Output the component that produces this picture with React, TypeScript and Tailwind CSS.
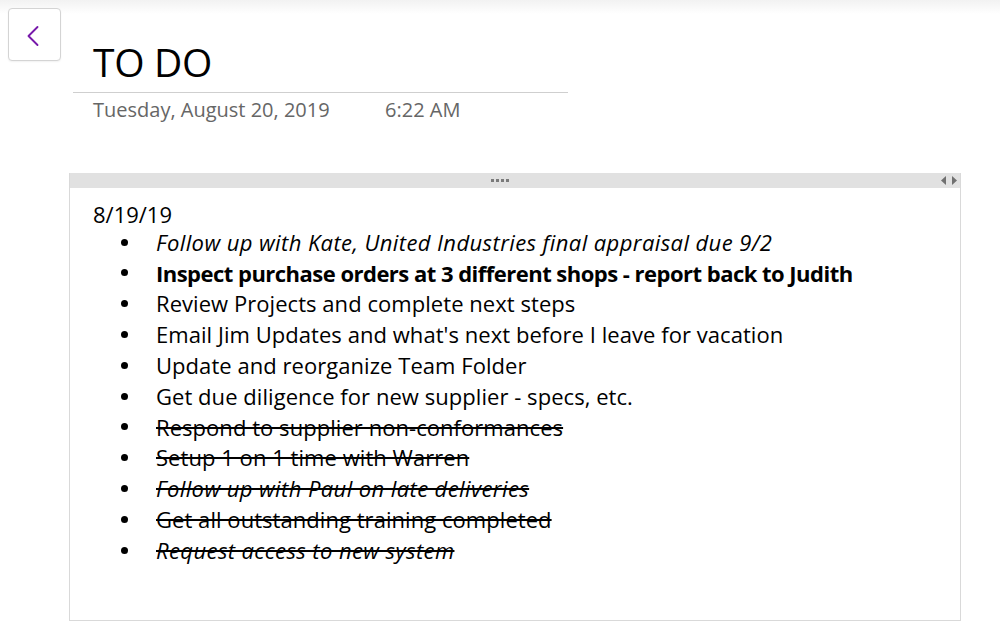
import { ChevronLeft } from 'lucide-react';

type Item = { text: string; italic?: boolean; bold?: boolean; done?: boolean };

const items: Item[] = [
  { text: 'Follow up with Kate, United Industries final appraisal due 9/2', italic: true },
  { text: 'Inspect purchase orders at 3 different shops - report back to Judith', bold: true },
  { text: 'Review Projects and complete next steps' },
  { text: "Email Jim Updates and what's next before I leave for vacation" },
  { text: 'Update and reorganize Team Folder' },
  { text: 'Get due diligence for new supplier - specs, etc.' },
  { text: 'Respond to supplier non-conformances', done: true },
  { text: 'Setup 1 on 1 time with Warren', done: true },
  { text: 'Follow up with Paul on late deliveries', italic: true, done: true },
  { text: 'Get all outstanding training completed', done: true },
  { text: 'Request access to new system', italic: true, done: true },
];

function styleFor(it: Item) {
  if (it.bold) return 'font-bold tracking-[-0.52px]';
  if (it.italic) return 'italic tracking-[0.4px]';
  return 'tracking-[0.05px]';
}

export default function App() {
  return (
    <div className="relative w-[1000px] h-[633px] overflow-hidden bg-white font-['Open_Sans',sans-serif] text-black">
      {/* faint shade along the top edge */}
      <div className="absolute inset-x-0 top-0 h-[14px] bg-gradient-to-b from-[#f2f2f2] to-white" />

      <div className="relative flex">
        <div className="pl-[8px] pt-[8px]">
          <button className="w-[53px] h-[53px] flex items-center justify-center rounded-[4px] border border-[#d4d4d4] bg-white shadow-[0_1px_2px_rgba(0,0,0,0.06)]">
            <ChevronLeft className="w-[36px] h-[36px] ml-[-4px] mt-[2px] text-[#7719aa]" strokeWidth={1.25} />
          </button>
        </div>

        <div className="ml-[12px] pt-[38px]">
          <div className="w-[495px] border-b border-[#cfcfcf] pl-[20px] pb-[6px]">
            <h1 className="text-[39px] leading-[48px] tracking-[-0.3px]">TO DO</h1>
          </div>
          <div className="pl-[20px] pt-[4px] flex text-[20px] leading-[26px] text-[#666666]">
            <span className="w-[292px]">Tuesday, August 20, 2019</span>
            <span>6:22 AM</span>
          </div>
        </div>
      </div>

      <div className="relative ml-[69px] mt-[50px] w-[892px] h-[448px] border border-[#d9d9d9] border-t-0 flex flex-col">
        <div className="relative h-[15px] bg-[#e1e1e1] flex items-center justify-center">
          <div className="flex gap-[2px] ml-[-30px]">
            <span className="w-[3px] h-[3px] bg-[#7a7a7a]" />
            <span className="w-[3px] h-[3px] bg-[#7a7a7a]" />
            <span className="w-[3px] h-[3px] bg-[#7a7a7a]" />
            <span className="w-[3px] h-[3px] bg-[#7a7a7a]" />
          </div>
          <div className="absolute right-[3px] top-[3px] flex gap-[6px]">
            <svg width="5" height="9" viewBox="0 0 5 9"><path d="M5 0 L0 4.5 L5 9 Z" fill="#707070" /></svg>
            <svg width="5" height="9" viewBox="0 0 5 9"><path d="M0 0 L5 4.5 L0 9 Z" fill="#707070" /></svg>
          </div>
        </div>

        <div className="pl-[23px] pt-[11px] text-[22px] leading-[30.8px]">
          <div className="mb-[-3px]">8/19/19</div>
          <ul>
            {items.map((it) => (
              <li key={it.text} className="flex items-center">
                <span className="w-[63px] pl-[28px] flex items-center">
                  <span className="w-[7px] h-[7px] rounded-full bg-black" />
                </span>
                <span className={`${styleFor(it)} ${it.done ? 'line-through decoration-[1.5px]' : ''}`}>
                  {it.text}
                </span>
              </li>
            ))}
          </ul>
        </div>
      </div>
    </div>
  );
}
